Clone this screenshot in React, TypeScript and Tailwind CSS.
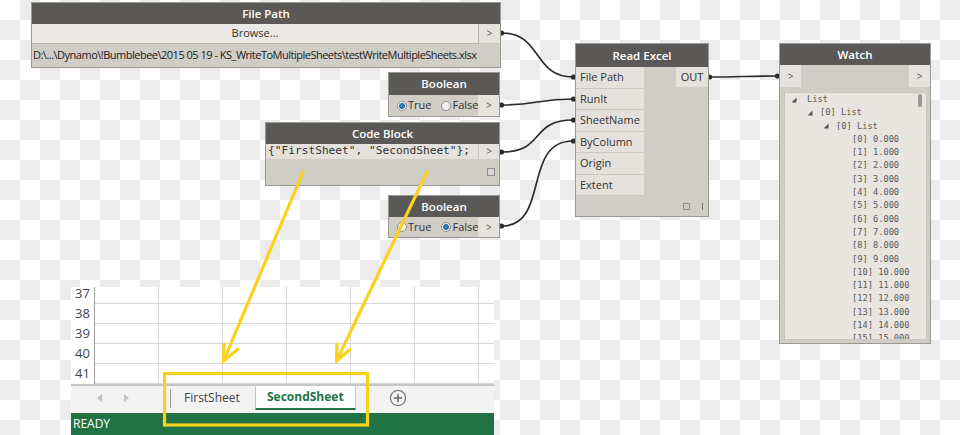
import React from "react";

function Radio({ checked }: { checked?: boolean }) {
  return (
    <span className="inline-flex w-[10px] h-[10px] rounded-full border border-[#8d8d8d] bg-[#f2f2f2] items-center justify-center mr-[1px]">
      {checked && <span className="w-[6px] h-[6px] rounded-full bg-[#2c7fc2] border border-[#1d5f99]" />}
    </span>
  );
}

function Header({ title, h }: { title: string; h: string }) {
  return (
    <div className={`${h} bg-[#5b5957] text-white font-semibold text-[11.5px] flex items-center justify-center shrink-0`}>
      {title}
    </div>
  );
}

function Tri() {
  return (
    <svg width="6" height="6" viewBox="0 0 6 6" className="shrink-0">
      <polygon points="5.5,0.5 5.5,5.5 0.5,5.5" fill="#5a5a5a" />
    </svg>
  );
}

const items = Array.from({ length: 16 }, (_, i) => i);

export default function App() {
  return (
    <div className="relative w-[960px] h-[435px] overflow-hidden bg-[image:conic-gradient(#ececec_25%,#ffffff_0_50%,#ececec_0_75%,#ffffff_0)] bg-[length:40px_40px] font-['Open_Sans',sans-serif] text-[#333]">
      {/* wires */}
      <svg className="absolute inset-0" width="960" height="435">
        <g fill="none" stroke="#2b2b2b" strokeWidth="1.7">
          <path d="M502,33 C542,33 533,77 573,77" />
          <path d="M502,105 C537,105 538,99 573,99" />
          <path d="M502,152 C545,152 530,120 573,120" />
          <path d="M502,226 C550,226 522,141 573,141" />
          <path d="M709,77 C740,77 746,76 777,76" />
        </g>
        <g fill="#2b2b2b">
          <circle cx="501.5" cy="33" r="2.6" />
          <circle cx="501.5" cy="105" r="2.6" />
          <circle cx="501.5" cy="152" r="2.6" />
          <circle cx="501.5" cy="226" r="2.6" />
          <circle cx="573.5" cy="77" r="2.6" />
          <circle cx="573.5" cy="99" r="2.6" />
          <circle cx="573.5" cy="120" r="2.6" />
          <circle cx="573.5" cy="141" r="2.6" />
          <circle cx="709.5" cy="77" r="2.6" />
          <circle cx="777.5" cy="76" r="2.6" />
        </g>
      </svg>

      {/* File Path node */}
      <div className="absolute left-[31px] top-[2px] w-[470px] border border-[#9c9994] bg-[#d0ccc6] flex flex-col">
        <Header title="File Path" h="h-[21px]" />
        <div className="flex h-[20px]">
          <div className="flex-1 bg-[#ebe9e6] border-r border-b border-[#b9b6b1] flex items-center justify-center text-[11px] text-[#333]">
            Browse...
          </div>
          <div className="w-[21px] bg-[#e6e3df] border-b border-[#c4c1bc] flex items-center justify-center text-[10px] text-[#555]">
            &gt;
          </div>
        </div>
        <div className="h-[23px] flex items-center pl-[1px] text-[11px] tracking-[-0.5px] text-[#222] whitespace-nowrap">
          D:\...\Dynamo\!Bumblebee\2015 05 19 - KS_WriteToMultipleSheets\testWriteMultipleSheets.xlsx
        </div>
      </div>

      {/* Boolean 1 */}
      <div className="absolute left-[388px] top-[72px] w-[112px] border border-[#9c9994] bg-[#d0ccc6] flex flex-col">
        <Header title="Boolean" h="h-[22px]" />
        <div className="flex h-[21px] items-center text-[11px]">
          <div className="flex-1 flex items-center pl-[8px]">
            <Radio checked />
            <span>True</span>
            <span className="w-[10px]" />
            <Radio />
            <span>False</span>
          </div>
          <div className="w-[21px] h-full bg-[#e6e3df] flex items-center justify-center text-[10px] text-[#555]">&gt;</div>
        </div>
      </div>

      {/* Code Block */}
      <div className="absolute left-[265px] top-[122px] w-[235px] border border-[#9c9994] bg-[#d0ccc6] flex flex-col">
        <Header title="Code Block" h="h-[21px]" />
        <div className="flex h-[15px]">
          <div className="flex-1 bg-[#e4e1dc] flex items-center pl-[2px] font-['DejaVu_Sans_Mono',monospace] text-[11.2px] text-[#333] whitespace-nowrap">
            {'{"FirstSheet", "SecondSheet"};'}
          </div>
          <div className="w-[21px] bg-[#e6e3df] border-l border-[#c4c1bc] flex items-center justify-center text-[10px] text-[#555]">&gt;</div>
        </div>
        <div className="h-[26px] flex items-center justify-end pr-[4px]">
          <span className="w-[8px] h-[8px] border border-[#8c8c8c] bg-[#d8d5d0]" />
        </div>
      </div>

      {/* Boolean 2 */}
      <div className="absolute left-[388px] top-[195px] w-[112px] border border-[#9c9994] bg-[#d0ccc6] flex flex-col">
        <Header title="Boolean" h="h-[21px]" />
        <div className="flex h-[20px] items-center text-[11px]">
          <div className="flex-1 flex items-center pl-[8px]">
            <Radio />
            <span>True</span>
            <span className="w-[10px]" />
            <Radio checked />
            <span>False</span>
          </div>
          <div className="w-[21px] h-full bg-[#e6e3df] flex items-center justify-center text-[10px] text-[#555]">&gt;</div>
        </div>
      </div>

      {/* Read Excel */}
      <div className="absolute left-[575px] top-[43px] w-[134px] border border-[#9c9994] bg-[#d0ccc6] flex flex-col">
        <Header title="Read Excel" h="h-[23px]" />
        <div className="flex">
          <div className="w-[68px] flex flex-col">
            {["File Path", "RunIt", "SheetName", "ByColumn", "Origin", "Extent"].map((p) => (
              <div key={p} className="h-[21.5px] bg-[#e4e1dc] border-b border-[#cbc7c1] flex items-center pl-[4px] text-[11px] text-[#333]">
                {p}
              </div>
            ))}
          </div>
          <div className="flex-1 flex justify-end">
            <div className="w-[32px] h-[20px] bg-[#e4e1dc] flex items-center justify-center text-[11px] text-[#333]">OUT</div>
          </div>
        </div>
        <div className="h-[20px] flex items-center justify-end gap-[12px] pr-[5px]">
          <span className="w-[7px] h-[7px] border border-[#8c8c8c]" />
          <span className="w-[1px] h-[7px] bg-[#777]" />
        </div>
      </div>

      {/* Watch */}
      <div className="absolute left-[779px] top-[43px] w-[152px] h-[301px] border border-[#9c9994] bg-[#d0ccc6] flex flex-col">
        <Header title="Watch" h="h-[21px]" />
        <div className="flex h-[22px] justify-between">
          <div className="w-[21px] bg-[#e6e3df] flex items-center justify-center text-[10px] text-[#555]">&gt;</div>
          <div className="w-[21px] bg-[#e6e3df] flex items-center justify-center text-[10px] text-[#555]">&gt;</div>
        </div>
        <div className="mt-[5px] ml-[4px] mr-[3px] h-[248px] bg-[#e8e5e0] border border-[#c9c5bf] overflow-hidden relative font-['DejaVu_Sans_Mono',monospace] text-[8.7px] leading-[13.3px] text-[#5a5a5a]">
          <div className="flex items-center pl-[6px] gap-[10px] h-[13.3px]">
            <Tri />
            <span>List</span>
          </div>
          <div className="flex items-center pl-[22px] gap-[7px] h-[13.3px]">
            <Tri />
            <span>[0] List</span>
          </div>
          <div className="flex items-center pl-[38px] gap-[7px] h-[13.3px]">
            <Tri />
            <span>[0] List</span>
          </div>
          {items.map((i) => (
            <div key={i} className="pl-[67px] h-[13.3px] whitespace-nowrap">
              [{i}] {i}.000
            </div>
          ))}
          <div className="absolute right-[4px] top-[1px] w-[4px] h-[13px] rounded-full bg-[#9a9894]" />
        </div>
      </div>

      {/* Excel */}
      <div className="absolute left-[71px] top-[287px] w-[423px] h-[148px] bg-white flex flex-col overflow-hidden font-['Open_Sans',sans-serif]">
        <div className="h-[97px] overflow-hidden">
          <div className="-mt-[3px]">
            {[37, 38, 39, 40, 41].map((n) => (
              <div key={n} className="flex h-[20px]">
                <div className="w-[24px] shrink-0 border-r border-[#9e9e9e] flex items-center justify-center text-[13px] text-[#444]">
                  {n}
                </div>
                {[0, 1, 2, 3, 4, 5, 6].map((c) => (
                  <div key={c} className="w-[64px] shrink-0 border-r border-b border-[#d6d6d6]" />
                ))}
              </div>
            ))}
          </div>
        </div>
        <div className="h-[29px] border-t-2 border-[#c6c6c6] bg-[#f3f3f3] flex items-start">
          <div className="w-[99px] h-[24px] flex items-center gap-[22px] pl-[26px]">
            <svg width="5" height="8" viewBox="0 0 5 8"><polygon points="5,0 5,8 0,4" fill="#c2c2c2" /></svg>
            <svg width="5" height="8" viewBox="0 0 5 8"><polygon points="0,0 0,8 5,4" fill="#c2c2c2" /></svg>
          </div>
          <div className="w-[1px] h-[19px] mt-[3px] bg-[#9a9a9a]" />
          <div className="h-[24px] flex items-center pl-[13px] pr-[15px] text-[12px] text-[#444]">FirstSheet</div>
          <div className="h-[24px] w-[101px] bg-white border-x border-[#c6c6c6] border-b-2 border-b-[#217346] flex items-center justify-center text-[12px] font-bold text-[#217346]">
            SecondSheet
          </div>
          <div className="h-[24px] flex items-center pl-[33px]">
            <svg width="18" height="18" viewBox="0 0 18 18">
              <circle cx="9" cy="9" r="7.6" fill="none" stroke="#7a7a7a" strokeWidth="1.3" />
              <path d="M9 4.8 V13.2 M4.8 9 H13.2" stroke="#6a6a6a" strokeWidth="1.5" />
            </svg>
          </div>
        </div>
        <div className="flex-1 bg-[#217346] flex items-center pl-[2px] text-[12px] text-white">READY</div>
      </div>

      {/* yellow annotations */}
      <svg className="absolute inset-0 pointer-events-none" width="960" height="435">
        <g fill="none" stroke="#fad11c" strokeWidth="3.2" strokeLinecap="round" strokeLinejoin="miter">
          <line x1="303" y1="172" x2="224" y2="360" />
          <polyline points="224,344 223.5,361 238,349" />
          <line x1="427" y1="172" x2="337" y2="360" />
          <polyline points="337,344 336.5,361 350,349.5" />
          <rect x="164.5" y="373.5" width="203" height="51.5" strokeLinecap="butt" />
        </g>
      </svg>
    </div>
  );
}
